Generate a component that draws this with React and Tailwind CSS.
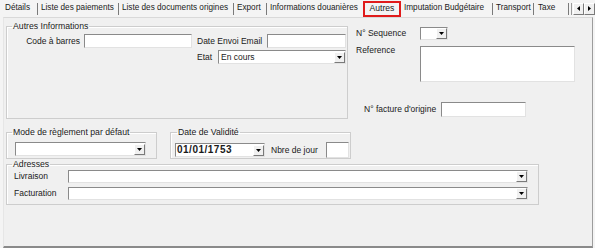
import React from "react";

const inputCls =
  "bg-white border border-t-[#8a8a8a] border-l-[#8a8a8a] border-r-[#e2e2e2] border-b-[#e2e2e2]";

function DropBtn() {
  return (
    <div className="w-[11px] h-[11px] flex items-center justify-center bg-[#f0f0f0] border border-t-white border-l-white border-r-[#7a7a7a] border-b-[#7a7a7a]">
      <svg width="5" height="3" viewBox="0 0 5 3">
        <path d="M0 0H5L2.5 3Z" fill="#000" />
      </svg>
    </div>
  );
}

function Select({ w, h = 14, children, bold }) {
  return (
    <div
      className={`${inputCls} flex items-center justify-between`}
      style={{ width: w, height: h }}
    >
      <span
        className={
          bold
            ? "pl-[1px] font-bold text-[10px] tracking-[0.5px] leading-none"
            : "pl-[2px] leading-none"
        }
      >
        {children}
      </span>
      <DropBtn />
    </div>
  );
}

function Input({ w, h = 14 }) {
  return <div className={inputCls} style={{ width: w, height: h }} />;
}

function Group({ legend, className, legendCls = "ml-[5px]", children }) {
  return (
    <fieldset
      className={`border border-[#cdcdcd] shadow-[inset_1px_1px_0_#fff] ${className}`}
    >
      <legend className={`${legendCls} px-[1px] leading-[10px] text-[8.7px]`}>
        {legend}
      </legend>
      {children}
    </fieldset>
  );
}

const tabs = [
  { t: "Détails", w: 35, pl: 2 },
  { t: "Liste des paiements", w: 81, pl: 3 },
  { t: "Liste des documents origines", w: 115, pl: 3 },
  { t: "Export", w: 33, pl: 3 },
  { t: "Informations douanières", w: 96, pl: 3, nosep: true },
  { t: "Autres", w: 38, active: true },
  { t: "Imputation Budgétaire", w: 92, pl: 3 },
  { t: "Transport", w: 41, pl: 3 },
  { t: "Taxe", w: 35, pl: 4 },
];

export default function App() {
  return (
    <div className="w-[595px] h-[248px] bg-[#f4f4f4] text-[8.5px] text-[#1a1a1a] font-['Liberation_Sans',Arial,sans-serif] overflow-hidden">
      {/* tab strip */}
      <div className="h-[17px] flex items-stretch pl-[3px]">
        {tabs.map((tb) =>
          tb.active ? (
            <div
              key={tb.t}
              className="flex items-center justify-center border-2 border-[#e01b1b] mt-[1px] h-[16px] text-[8.6px]"
              style={{ width: tb.w }}
            >
              <span className="-mt-[2px]">{tb.t}</span>
            </div>
          ) : (
            <div
              key={tb.t}
              className="flex items-center h-[17px]"
              style={{ width: tb.w }}
            >
              <span
                className="flex-1 whitespace-nowrap overflow-hidden text-[8.2px]"
                style={{ paddingLeft: tb.pl }}
              >
                {tb.t}
              </span>
              {!tb.nosep && (
                <div className="w-[1px] h-[12px] bg-[#7a7a7a]" />
              )}
            </div>
          )
        )}
        <div className="flex items-center h-[17px] ml-[2px]">
          <div className="w-[1px] h-[12px] bg-[#9a9a9a]" />
          <div className="ml-[1px] flex">
            <div className="w-[11px] h-[12px] flex items-center justify-center bg-[#f0f0f0] border border-t-white border-l-white border-r-[#7a7a7a] border-b-[#7a7a7a]">
              <svg width="3" height="5" viewBox="0 0 3 5">
                <path d="M3 0V5L0 2.5Z" fill="#000" />
              </svg>
            </div>
            <div className="w-[11px] h-[12px] flex items-center justify-center bg-[#f0f0f0] border border-t-white border-l-white border-r-[#7a7a7a] border-b-[#7a7a7a]">
              <svg width="3" height="5" viewBox="0 0 3 5">
                <path d="M0 0V5L3 2.5Z" fill="#000" />
              </svg>
            </div>
          </div>
        </div>
      </div>

      {/* panel */}
      <div className="ml-[3px] w-[590px] h-[231px] bg-[#f0f0f0] border-t border-t-[#d9d9d9] border-l border-l-[#e6e6e6] border-r border-r-[#9c9c9c] border-b-2 border-b-[#8a8a8a]">
        {/* top section */}
        <div className="flex items-start">
          <Group
            legend="Autres Informations"
            className="ml-[2px] mt-[3px] w-[342px] h-[98px]"
          >
            <div className="mt-[3px] flex items-center h-[14px]">
              <div className="w-[73px] text-right">Code à barres</div>
              <div className="ml-[4px]">
                <Input w={108} />
              </div>
              <div className="ml-[5px] w-[70px] whitespace-nowrap">
                Date Envoi Email
              </div>
              <Input w={79} />
            </div>
            <div className="mt-[2px] flex items-center h-[14px] pl-[190px]">
              <div className="w-[21px]">Etat</div>
              <Select w={128}>En cours</Select>
            </div>
          </Group>

          <div className="ml-[8px] mt-[9px] flex flex-col">
            <div className="flex items-center h-[13px]">
              <div className="w-[64px]">N° Sequence</div>
              <Select w={28} h={13} />
            </div>
            <div className="mt-[6px] flex items-start">
              <div className="w-[64px] -mt-[2px]">Reference</div>
              <div className={inputCls} style={{ width: 155, height: 36 }} />
            </div>
            <div className="mt-[20px] flex items-center h-[15px] pl-[8px]">
              <div className="w-[77px] whitespace-nowrap">
                N° facture d'origine
              </div>
              <Input w={85} h={15} />
            </div>
          </div>
        </div>

        {/* middle row */}
        <div className="mt-[8px] flex items-start">
          <Group
            legend="Mode de règlement par défaut"
            className="ml-[2px] w-[151px] h-[32px]"
          >
            <div className="mt-[5px] ml-[8px]">
              <Select w={131} />
            </div>
          </Group>
          <Group
            legend="Date de Validité"
            legendCls="ml-[6px]"
            className="ml-[13px] w-[181px] h-[32px]"
          >
            <div className="mt-[5px] flex items-center h-[16px] pl-[4px]">
              <Select w={90} bold>
                01/01/1753
              </Select>
              <div className="ml-[6px] w-[55px] whitespace-nowrap">
                Nbre de jour
              </div>
              <Input w={23} h={16} />
            </div>
          </Group>
        </div>

        {/* adresses */}
        <Group legend="Adresses" className="ml-[2px] w-[533px] h-[46px]">
          <div className="mt-[1px] flex items-center h-[13px]">
            <div className="w-[61px] pl-[7px]">Livraison</div>
            <Select w={460} h={13} />
          </div>
          <div className="mt-[4px] flex items-center h-[13px]">
            <div className="w-[61px] pl-[7px]">Facturation</div>
            <Select w={460} h={13} />
          </div>
        </Group>
      </div>
    </div>
  );
}
